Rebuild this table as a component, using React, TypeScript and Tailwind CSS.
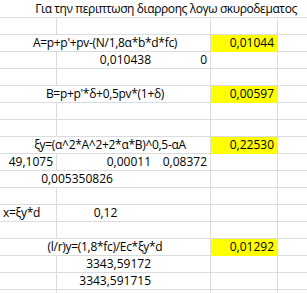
type Cell = {
  span?: number;
  text?: string;
  align?: 'left' | 'center' | 'right';
  yellow?: boolean;
  br?: boolean;
  cls?: string;
};

const empty = (): Cell[] => [{ br: true }, {}, { br: true }, { br: true }, {}];
const tight = 'tracking-[-0.3px]';

const rows: Cell[][] = [
  empty(),
  [{ span: 3, text: "A=p+p'+pv-(N/1,8α*b*d*fc)", align: 'center', br: true, cls: tight }, { text: '0,01044', align: 'right', yellow: true, br: true }, {}],
  [{ br: true }, { text: '0,010438', align: 'right' }, { text: '0', align: 'right', br: true }, { br: true }, {}],
  empty(),
  [{ span: 3, text: "B=p+p'*δ+0,5pv*(1+δ)", align: 'center', br: true, cls: tight }, { text: '0,00597', align: 'right', yellow: true, br: true }, {}],
  empty(),
  empty(),
  [{ span: 3, text: 'ξy=(α^2*A^2+2*α*B)^0,5-αA', align: 'center', br: true, cls: `pl-[10px] ${tight}` }, { text: '0,22530', align: 'right', yellow: true, br: true }, {}],
  [{ text: '49,1075', align: 'right', br: true }, { text: '0,00011', align: 'right' }, { text: '0,08372', align: 'right', br: true }, { br: true }, {}],
  [{ span: 2, text: '0,005350826', align: 'center' }, { br: true }, { br: true }, {}],
  empty(),
  [{ text: 'x=ξy*d', align: 'left', br: true, cls: tight }, { text: '0,12', align: 'center' }, { br: true }, { br: true }, {}],
  empty(),
  [{ span: 3, text: '(l/r)y=(1,8*fc)/Ec*ξy*d', align: 'center', br: true, cls: tight }, { text: '0,01292', align: 'right', yellow: true, br: true }, {}],
  [{ br: true }, { text: '3343,59172', align: 'right' }, { br: true }, { br: true }, {}],
  [{ br: true }, { text: '3343,591715', align: 'right' }, { br: true }, { br: true }, {}],
  empty(),
];

const spanCls: Record<number, string> = { 1: 'col-span-1', 2: 'col-span-2', 3: 'col-span-3', 5: 'col-span-5' };
const alignCls = { left: 'justify-start pl-[3px]', center: 'justify-center', right: 'justify-end pr-[3px]' };

function SheetCell({ cell }: { cell: Cell }) {
  return (
    <div
      className={[
        'flex h-[17px] items-center whitespace-nowrap border-b border-[#dadcdd]',
        spanCls[cell.span ?? 1],
        alignCls[cell.align ?? 'left'],
        cell.br ? 'border-r' : '',
        cell.yellow ? 'bg-[#ffff00] border-b-[#ffff00]' : '',
        cell.cls ?? '',
      ].join(' ')}
    >
      {cell.text}
    </div>
  );
}

export default function App() {
  return (
    <div className="h-[293px] w-[307px] overflow-hidden bg-white font-['Open_Sans',sans-serif] text-[12px] leading-none text-black">
      <div className="flex h-[18px] items-center justify-center whitespace-nowrap border-b border-[#dadcdd] pl-[25px] tracking-[-0.4px]">
        Για την περιπτωση διαρροης λογω σκυροδεματος
      </div>
      {rows.map((row, i) => (
        <div key={i} className="grid grid-cols-[57px_97px_57px_67px_1fr]">
          {row.map((cell, j) => (
            <SheetCell key={j} cell={cell} />
          ))}
        </div>
      ))}
    </div>
  );
}
